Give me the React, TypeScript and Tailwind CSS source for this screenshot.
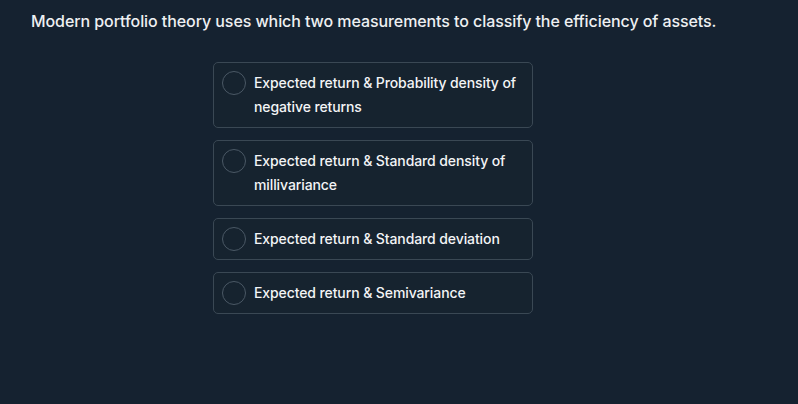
const options = [
  'Expected return & Probability density of negative returns',
  'Expected return & Standard density of millivariance',
  'Expected return & Standard deviation',
  'Expected return & Semivariance',
]

export default function App() {
  return (
    <div
      className="w-[798px] h-[404px] bg-[#152230] text-[#eef0f2] overflow-hidden"
      style={{ fontFamily: 'Inter, "Noto Sans", sans-serif' }}
    >
      <div className="pl-[31px] pt-[10px] w-[715px]">
        <h1 className="text-[16px] leading-[22px] font-medium tracking-[-0.08px] whitespace-nowrap">
          Modern portfolio theory uses which two measurements to classify the efficiency of assets.
        </h1>
        <div className="mt-[30px] w-[320px] mx-auto flex flex-col gap-3">
          {options.map((opt) => (
            <button
              key={opt}
              className="flex items-start gap-2 p-2 text-left rounded-[5px] border border-[#3a4854] bg-[#16232f]"
            >
              <span className="w-6 h-6 shrink-0 rounded-full border border-[#4a5865]" />
              <span className="text-[14px] leading-[24px] font-medium tracking-[-0.1px] text-[#f3f4f6]">
                {opt}
              </span>
            </button>
          ))}
        </div>
      </div>
    </div>
  )
}
